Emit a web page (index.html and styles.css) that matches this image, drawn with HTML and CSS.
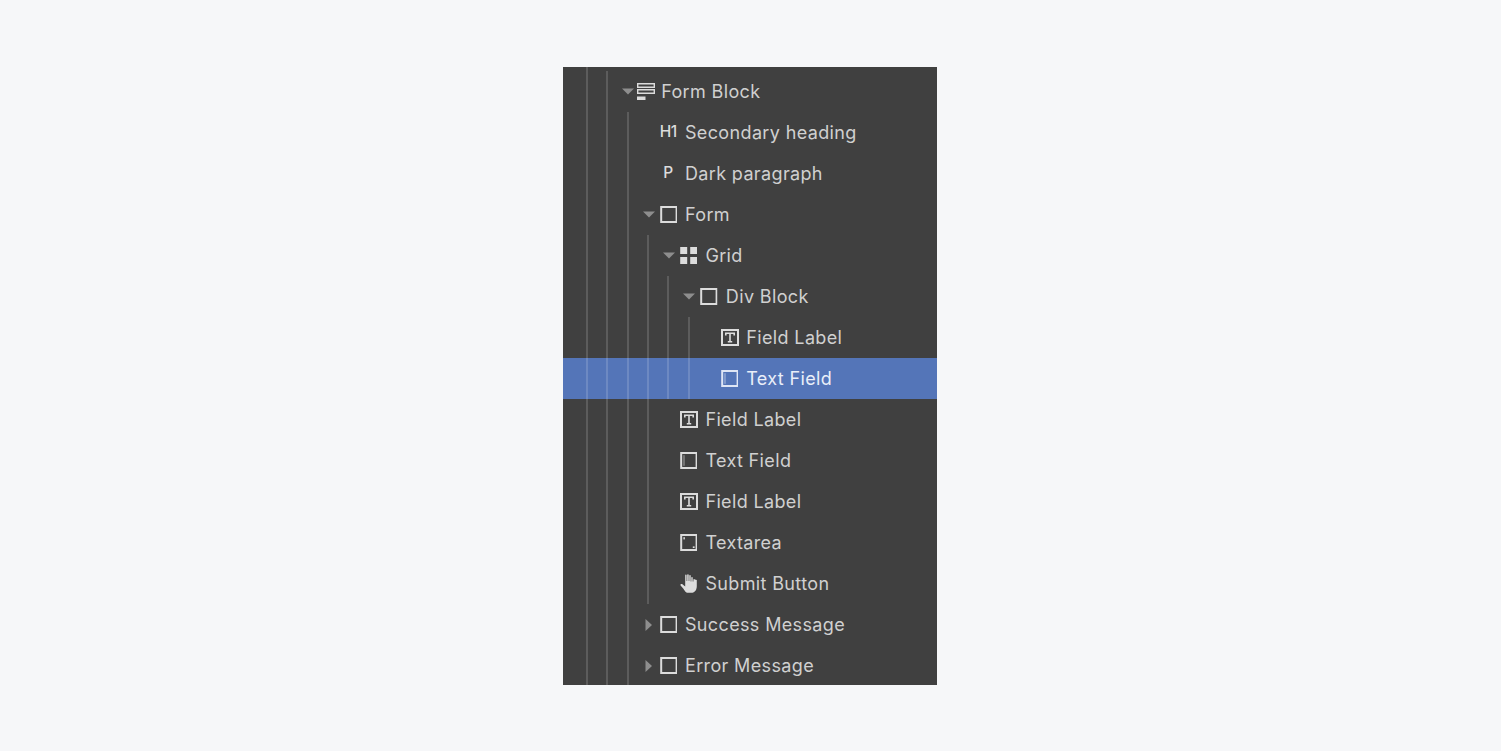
FILE: index.html
```html
<!DOCTYPE html>
<html lang="en">
<head>
<meta charset="utf-8">
<title>Navigator</title>
<link rel="stylesheet" href="styles.css">
</head>
<body>
<svg class="defs" width="0" height="0" aria-hidden="true">
  <defs>
    <symbol id="down" viewBox="0 0 12 7"><path d="M0 0.5H12L6 6.5Z"/></symbol>
    <symbol id="right" viewBox="0 0 12 12"><path d="M2.5 0L9 6L2.5 12Z"/></symbol>
    <symbol id="square" viewBox="0 0 17 17"><rect x="1" y="1" width="15.4" height="15" fill="none" stroke="currentColor" stroke-width="2"/></symbol>
    <symbol id="formblock" viewBox="0 0 18 17">
      <path d="M0.7 0.7H17.3V4.3H0.7ZM0.7 6.7H17.3V10.3H0.7Z" fill="none" stroke="currentColor" stroke-width="1.4"/>
      <rect x="0" y="13.5" width="8.5" height="3.5" fill="currentColor"/>
    </symbol>
    <symbol id="grid" viewBox="0 0 17 17">
      <path d="M0 0H7V7H0ZM10 0H17V7H10ZM0 10H7V17H0ZM10 10H17V17H10Z" fill="currentColor"/>
    </symbol>
    <symbol id="label" viewBox="0 0 18 17">
      <rect x="1" y="1" width="16" height="15" fill="none" stroke="currentColor" stroke-width="2"/>
      <path d="M4.8 6.5V4.3H13.2V6.5M9 4.3V12.6M6.8 12.7H11.2" fill="none" stroke="currentColor" stroke-width="1.6"/>
    </symbol>
    <symbol id="field" viewBox="0 0 17 17">
      <rect x="1" y="1" width="15.4" height="15" fill="none" stroke="currentColor" stroke-width="2"/>
      <rect x="3.2" y="3.2" width="1.2" height="10.6" fill="currentColor" opacity="0.55"/>
    </symbol>
    <symbol id="area" viewBox="0 0 17 17">
      <rect x="1" y="1" width="15.4" height="15" fill="none" stroke="currentColor" stroke-width="2"/>
      <rect x="3.2" y="3.2" width="1.5" height="2.2" fill="currentColor"/>
      <rect x="12.6" y="12.4" width="1.8" height="1.6" fill="currentColor"/>
    </symbol>
    <symbol id="hand" viewBox="0 0 17 19">
      <path d="M5 1.2C5 0.3 6.4 0.3 6.4 1.2V7H7V0.8C7 -0.1 8.5 -0.1 8.5 0.8V7H9.1V1.6C9.1 0.7 10.5 0.7 10.5 1.6V7.6H11.1V3.6C11.1 2.8 12.5 2.8 12.5 3.6V7.6H13.2V5.6C13.2 4.8 14.6 4.8 14.6 5.6L16.6 5.9V12C16.6 15.5 15 18.8 11 18.8H8C5.2 18.8 4.6 16.6 3.2 14.8L0.4 11.4C-0.2 10.5 0.9 9.4 1.9 10.1L5 12.6Z" fill="currentColor"/>
    </symbol>
  </defs>
</svg>

<main class="panel">
  <div class="level level-root">
    <div class="level">
      <div class="row row-block">
        <svg class="caret"><use href="#down"/></svg>
        <svg class="icon icon-wide"><use href="#formblock"/></svg>
        <span class="name">Form Block</span>
      </div>
      <div class="level">
        <div class="row">
          <span class="caret"></span>
          <span class="icon icon-text icon-h1">H1</span>
          <span class="name">Secondary heading</span>
        </div>
        <div class="row">
          <span class="caret"></span>
          <span class="icon icon-text">P</span>
          <span class="name">Dark paragraph</span>
        </div>
        <div class="row">
          <svg class="caret"><use href="#down"/></svg>
          <svg class="icon"><use href="#square"/></svg>
          <span class="name">Form</span>
        </div>
        <div class="level">
          <div class="row">
            <svg class="caret"><use href="#down"/></svg>
            <svg class="icon"><use href="#grid"/></svg>
            <span class="name">Grid</span>
          </div>
          <div class="level">
            <div class="row">
              <svg class="caret"><use href="#down"/></svg>
              <svg class="icon"><use href="#square"/></svg>
              <span class="name">Div Block</span>
            </div>
            <div class="level">
              <div class="row">
                <span class="caret"></span>
                <svg class="icon icon-wide"><use href="#label"/></svg>
                <span class="name">Field Label</span>
              </div>
              <div class="row row-selected">
                <span class="caret"></span>
                <svg class="icon"><use href="#field"/></svg>
                <span class="name">Text Field</span>
              </div>
            </div>
          </div>
          <div class="row">
            <span class="caret"></span>
            <svg class="icon icon-wide"><use href="#label"/></svg>
            <span class="name">Field Label</span>
          </div>
          <div class="row">
            <span class="caret"></span>
            <svg class="icon"><use href="#field"/></svg>
            <span class="name">Text Field</span>
          </div>
          <div class="row">
            <span class="caret"></span>
            <svg class="icon icon-wide"><use href="#label"/></svg>
            <span class="name">Field Label</span>
          </div>
          <div class="row">
            <span class="caret"></span>
            <svg class="icon"><use href="#area"/></svg>
            <span class="name">Textarea</span>
          </div>
          <div class="row">
            <span class="caret"></span>
            <svg class="icon icon-hand"><use href="#hand"/></svg>
            <span class="name">Submit Button</span>
          </div>
        </div>
        <div class="row">
          <svg class="caret caret-closed"><use href="#right"/></svg>
          <svg class="icon"><use href="#square"/></svg>
          <span class="name">Success Message</span>
        </div>
        <div class="row">
          <svg class="caret caret-closed"><use href="#right"/></svg>
          <svg class="icon"><use href="#square"/></svg>
          <span class="name">Error Message</span>
        </div>
      </div>
    </div>
  </div>
</main>
</body>
</html>
```
FILE: styles.css
```css
* { box-sizing: border-box; }

html, body { height: 100%; }

body {
  margin: 0;
  background: #f6f7f9;
  display: flex;
  justify-content: center;
  padding-top: 67px;
  padding-right: 1px;
  font-family: Inter, "Liberation Sans", sans-serif;
  color: #d0d0d0;
  overflow: hidden;
}

.defs { position: absolute; }

.panel {
  width: 374px;
  height: 618px;
  background: #404040;
  overflow: hidden;
  isolation: isolate;
  padding-left: 22.7px;
}

.level {
  margin-left: 18.45px;
  border-left: 2px solid rgba(255, 255, 255, 0.15);
  flex: none;
}

.level-root {
  margin-left: 0;
  padding-top: 4px;
  height: 100%;
}

.row {
  position: relative;
  display: flex;
  align-items: center;
  height: 41px;
  padding-left: 14px;
}

.row-selected { color: #e9eef8; }

.row-selected::before {
  content: "";
  position: absolute;
  top: 0;
  bottom: 0;
  left: -200px;
  width: 800px;
  background: #5475b8;
  z-index: -1;
}

.caret {
  flex: none;
  width: 12px;
  height: 7px;
  fill: #8e8e8e;
}

.caret-closed { height: 12px; }

.icon {
  flex: none;
  width: 17.4px;
  height: 17px;
  margin-left: 5px;
  color: #dcdcdc;
}

.row-selected .icon { color: #dfe6f5; }

.icon-wide { width: 18px; }

.icon-hand { height: 19px; }

.icon-text {
  font-size: 15.5px;
  font-weight: 500;
  line-height: 15px;
  text-align: center;
  white-space: nowrap;
}

.icon-h1 { letter-spacing: -0.4px; }

.name {
  margin-left: 8px;
  font-size: 18px;
  line-height: 24px;
  letter-spacing: 0.36px;
  white-space: nowrap;
}

.icon-wide + .name { margin-left: 7.4px; }

.row-block .icon { margin-left: 3px; }

.row-block .name { margin-left: 6px; }
```
